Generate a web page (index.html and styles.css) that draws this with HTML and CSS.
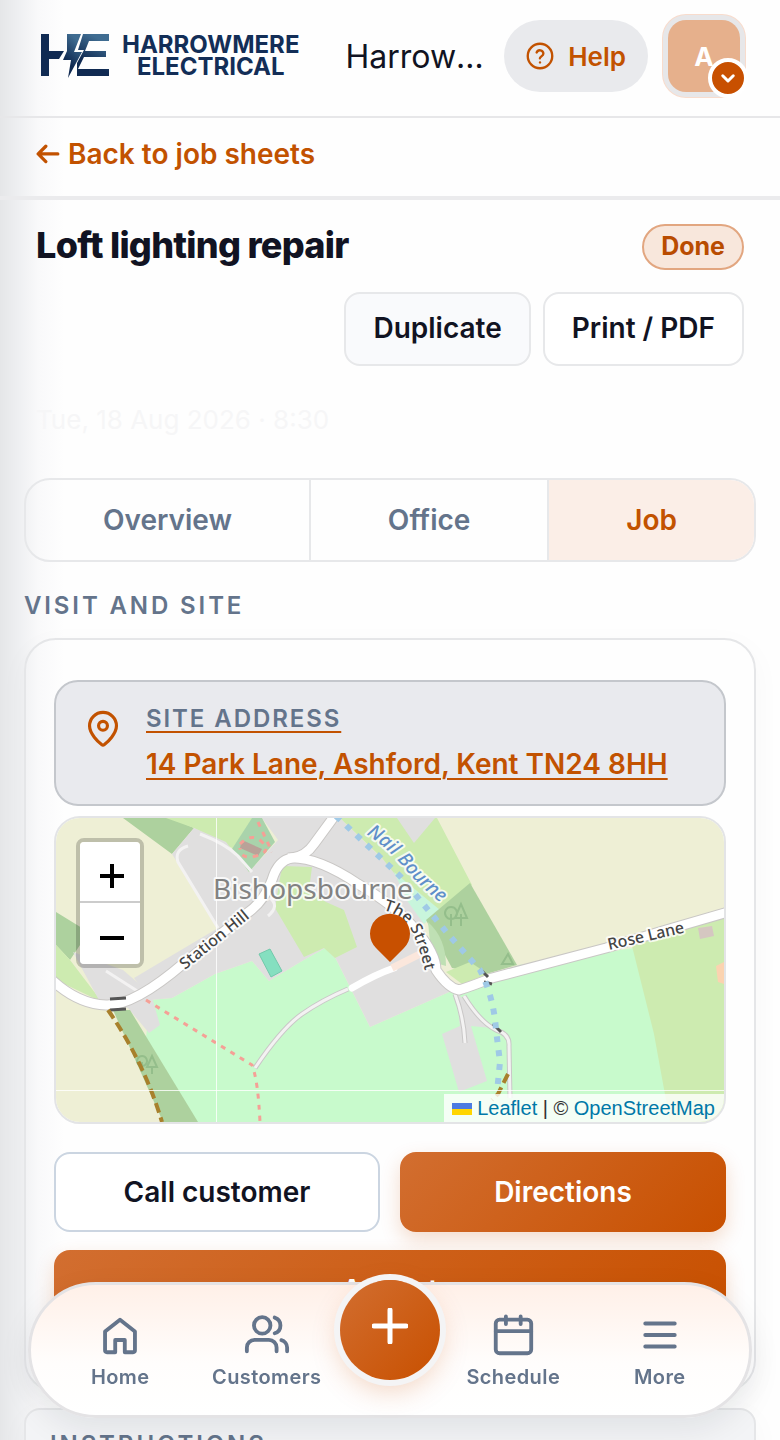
FILE: index.html
```html
<!DOCTYPE html>
<html lang="en">
<head>
<meta charset="UTF-8">
<meta name="viewport" content="width=device-width, initial-scale=1.0">
<title>Loft lighting repair - Harrowmere Electrical</title>
<link rel="stylesheet" href="styles.css">
</head>
<body>
    <div class="app">
        <header class="topbar">
            <a class="brand" href="#" aria-label="Harrowmere Electrical">
                <svg class="brand-mark" viewBox="0 0 68 44" aria-hidden="true">
                    <defs>
                        <linearGradient id="markFill" x1="0" y1="1" x2="0.4" y2="0">
                            <stop offset="0.4" stop-color="#102a52"/>
                            <stop offset="1" stop-color="#3f6c91"/>
                        </linearGradient>
                    </defs>
                    <path fill="#102a52" d="M0 0h8v17h15l-5 8H8v17H0z"/>
                    <path fill="url(#markFill)" d="M26 0h14l-7 18h8L27 44l3-18h-8l4-9z"/>
                    <path fill="url(#markFill)" d="M42 0h26v7H48l-4 10h21v6H43l-6 12h31v7H36V29l7-13h-6z"/>
                </svg>
                <span class="brand-name">HARROWMERE<br>ELECTRICAL</span>
            </a>
            <span class="company">Harrowmere Electrical</span>
            <button type="button" class="help">
                <svg viewBox="0 0 24 24" class="icon-help" aria-hidden="true">
                    <circle cx="12" cy="12" r="10.500"/>
                    <path d="M9.100 9a3 3 0 0 1 5.800 1c0 2-3 2.600-3 4"/>
                    <path d="M12 17.500h.01"/>
                </svg>
                Help
            </button>
            <button type="button" class="avatar" aria-label="Account menu">
                A
                <span class="avatar-badge">
                    <svg viewBox="0 0 24 24" aria-hidden="true"><path d="m5 9 7 7 7-7"/></svg>
                </span>
            </button>
        </header>

        <nav class="back-row">
            <a href="#" class="back-link">
                <svg viewBox="0 0 22 20" aria-hidden="true"><path d="M20 10H2M9 3l-7 7 7 7"/></svg>
                Back to job sheets
            </a>
        </nav>

        <section class="job-head">
            <div class="title-row">
                <h1>Loft lighting repair</h1>
                <span class="status">Done</span>
            </div>
            <div class="head-actions">
                <button type="button" class="btn-small tinted">Duplicate</button>
                <button type="button" class="btn-small">Print / PDF</button>
            </div>
            <p class="job-date">Tue, 18 Aug 2026 · 8:30</p>
        </section>

        <main>
            <div class="tabs" role="tablist">
                <button type="button" role="tab" aria-selected="false">Overview</button>
                <button type="button" role="tab" aria-selected="false">Office</button>
                <button type="button" role="tab" aria-selected="true" class="active">Job</button>
            </div>

            <h2 class="section-label">Visit and site</h2>

            <div class="card">
                <a href="#" class="address">
                    <svg viewBox="0 0 24 24" aria-hidden="true">
                        <path d="M20.500 10c0 5-5.500 10.200-7.600 11.800a1.500 1.500 0 0 1-1.800 0C9 20.200 3.500 15 3.500 10a8.500 8.500 0 0 1 17 0"/>
                        <circle cx="12" cy="10" r="2.800"/>
                    </svg>
                    <span class="address-text">
                        <span class="address-label">Site address</span>
                        <span class="address-value">14 Park Lane, Ashford, Kent TN24 8HH</span>
                    </span>
                </a>

                <div class="map">
                    <svg class="map-tiles" viewBox="0 0 668 304" preserveAspectRatio="xMidYMid slice" role="img" aria-label="Map of Bishopsbourne">
                        <rect width="668" height="304" fill="#eeefd5"/>
                        <!-- fields and woods -->
                        <path fill="#c8facc" d="M94 182 116 180 159 156 196 143 213 163 246 143 269 130 280 141 314 209 400 171 463 147 578 130 630 304H140L90 220z"/>
                        <path fill="#cdebb0" d="M576 128 668 94V304H614L598 216z"/>
                        <path fill="#add19e" d="M67 0h48l23 10-22 26zM0 94 26 110V124L14 142 0 127z"/>
                        <path fill="#cdebb0" d="M110 0h90l-20 32-42-22zM0 127 14 142 46 184 0 162z"/>
                        <path fill="#e0dfdf" d="M138 10 170 24 193 54 222 22 206 0H284L344 58 366 100 378 148 400 171 314 209 280 141 269 130 246 143 213 163 196 143 159 156 116 180 94 182 78 160 162 110 116 36z"/>
                        <path fill="#e0dfdf" d="M17 134 67 152 95 176 104 207 93 215 72 190 44 184z"/>
                        <path fill="#a9d3ab" d="M196 0 206 0 219 24 193 54 176 31z"/>
                        <path fill="#cdebb0" d="M226 48 256 49 253 72 270 84 288 92 301 129 279 140 268 130 248 139 219 90z"/>
                        <path fill="#cdebb0" d="M284 0H381L416 67 374 100 326 40z"/>
                        <path fill="#e0dfdf" d="M341 0h38L358 25z"/>
                        <path fill="#c8f5dc" d="M338 54 384 92 368 106 352 84z"/>
                        <path fill="#add19e" d="M414 65 461 147 430 156 396 150 370 102z"/>
                        <path fill="#bfe0b4" d="M372 104q18 16 18 44l-14-4z"/>
                        <path fill="#cdebb0" d="M390 154 414 144 432 156 406 166z"/>
                        <path fill="#add19e" d="M57 192H74L142 304H107z"/>
                        <path fill="#e0dfdf" d="M400 174 436 210 415 208 431 263 403 274 386 216 404 208z"/>
                        <path fill="#85dfc0" stroke="#72c9ab" d="M203 136 214 131 226 153 215 159z"/>
                        <path fill="#b9a298" d="M186 22 206 31 202 38 184 30z"/>
                        <path fill="#d5c7c1" d="M642 110l14-2 2 10-14 3z"/>
                        <path fill="#fbd3b0" d="M660 148l8-4v22l-6-2z"/>
                        <g fill="none" stroke="#94be8b" stroke-width="2">
                            <path d="M395 101a6 6 0 1 1 .1 0zm0-5v12M405 86l-6 14h12zm0 10v12"/>
                            <path d="M86 248a5 5 0 1 1 .1 0zm0-4v10M96 238l-5 11h10zm0 10v8"/>
                            <path d="M452 136l-6 10h11z"/>
                        </g>
                        <!-- minor tracks -->
                        <g fill="none" stroke="#c9c7c7" stroke-width="5">
                            <path d="M292 171Q266 182 246 196T199 250"/>
                            <path d="M399 176Q408 200 409 225M408 178Q424 204 440 212Q454 216 453 228L454 280"/>
                        </g>
                        <g fill="none" stroke="#f3f2f2" stroke-width="3">
                            <path d="M292 171Q266 182 246 196T199 250"/>
                            <path d="M399 176Q408 200 409 225M408 178Q424 204 440 212Q454 216 453 228L454 280"/>
                            <path d="M144 16Q170 26 182 38L196 54M132 28Q118 32 122 44L162 110M50 153 86 176M212 98Q224 88 214 80"/>
                        </g>
                        <!-- roads, casing first -->
                        <g fill="none" stroke="#c9c7c5" stroke-width="11" stroke-linejoin="round">
                            <path d="M-4 162Q22 186 50 187T128 145L190 96Q208 84 216 62Q222 42 236 40Q250 38 258 26L280-4"/>
                            <path d="M232 40Q260 38 302 66Q340 88 360 112T380 152Q392 170 403 172Q416 168 436 160L550 130 610 112 672 94"/>
                        </g>
                        <g fill="none" stroke="#fff" stroke-width="9" stroke-linejoin="round">
                            <path d="M-4 162Q22 186 50 187T128 145L190 96Q208 84 216 62Q222 42 236 40Q250 38 258 26L280-4"/>
                            <path d="M232 40Q260 38 302 66Q340 88 360 112T380 152Q392 170 403 172Q416 168 436 160L550 130 610 112 672 94"/>
                        </g>
                        <path fill="none" stroke="#fff" stroke-width="7" stroke-linecap="round" d="M296 170Q320 156 338 150"/>
                        <path fill="none" stroke="#fbe7dc" stroke-width="7" d="M336 150 364 136"/>
                        <path stroke="#555" stroke-width="3" d="M54 181l16-1M54 192l16-1M424 151l8 8M428 164l8 2M437 206l8 8"/>
                        <!-- stream and footpaths -->
                        <path fill="none" stroke="#9fc9e6" stroke-width="6" stroke-dasharray="6 8" d="M280-2 344 58 392 116 424 152Q438 180 440 212L444 244 441 274"/>
                        <g fill="none" stroke="#f5a096" stroke-width="3" stroke-dasharray="5 6">
                            <path d="M90 182 196 247Q202 262 204 304M202 4 216 34M184 26Q196 14 206 24T200 38 184 30"/>
                        </g>
                        <path fill="none" stroke="#a8802c" stroke-width="4" stroke-dasharray="10 5" d="M52 192Q88 244 106 304M452 256 442 276 436 282"/>
                        <!-- tile seams -->
                        <path stroke="#fff" stroke-opacity="0.8" d="M160.500 0V304M0 272.500H668"/>
                        <path id="station" fill="none" d="M129 152 196 98"/>
                        <path id="street" fill="none" d="M327 92Q350 98 358 118T370 158"/>
                        <path id="stream" fill="none" d="M310 16Q334 32 350 52T402 98"/>
                        <g class="map-text">
                            <text class="place" x="157" y="81">Bishopsbourne</text>
                            <text class="road"><textPath href="#station">Station Hill</textPath></text>
                            <text class="road"><textPath href="#street">The Street</textPath></text>
                            <text class="water"><textPath href="#stream">Nail Bourne</textPath></text>
                            <text class="road" transform="translate(553 132) rotate(-13)">Rose Lane</text>
                        </g>
                        <path fill="#c85000" d="M334 144 320 130A20 20 0 1 1 348 130z"/>
                    </svg>
                    <div class="map-zoom">
                        <button type="button" aria-label="Zoom in"><svg viewBox="0 0 26 26" aria-hidden="true"><path d="M1 13h24M13 1v24"/></svg></button>
                        <button type="button" aria-label="Zoom out"><svg viewBox="0 0 26 26" aria-hidden="true"><path d="M1 13h24"/></svg></button>
                    </div>
                    <div class="map-credit">
                        <a href="#"><svg viewBox="0 0 20 12" aria-hidden="true"><path fill="#4c7be1" d="M0 0h20v6H0z"/><path fill="#ffd500" d="M0 6h20v6H0z"/></svg> Leaflet</a> | © <a href="#">OpenStreetMap</a>
                    </div>
                </div>

                <div class="actions">
                    <button type="button" class="btn">Call customer</button>
                    <button type="button" class="btn primary">Directions</button>
                    <button type="button" class="btn primary wide">Accept</button>
                </div>
            </div>

            <div class="card instructions">
                <h2 class="section-label">Instructions</h2>
            </div>
        </main>
    </div>

    <nav class="dock">
        <a href="#">
            <svg viewBox="0 0 24 24" aria-hidden="true"><path d="M4.200 10.200 12 4l7.800 6.200V20a1 1 0 0 1-1 1h-4.300v-6.400h-5V21H5.200a1 1 0 0 1-1-1z"/></svg>
            Home
        </a>
        <a href="#">
            <svg viewBox="0 0 24 24" aria-hidden="true"><circle cx="9.500" cy="7" r="4.300"/><path d="M1.500 20.500v-2a4 4 0 0 1 4-4h7.500a4 4 0 0 1 4 4v2M16 2.900a4.300 4.300 0 0 1 0 8.200M19.500 14.700a4 4 0 0 1 3 3.800v2"/></svg>
            Customers
        </a>
        <button type="button" class="fab" aria-label="Add">
            <svg viewBox="0 0 36 36" aria-hidden="true"><path d="M2 18h32M18 2v32"/></svg>
        </button>
        <a href="#">
            <svg viewBox="0 0 24 24" aria-hidden="true"><rect x="3" y="4" width="18.500" height="17.500" rx="2"/><path d="M8.300 2.300v4M16 2.300v4M3 10h18.500"/></svg>
            Schedule
        </a>
        <a href="#">
            <svg viewBox="0 0 24 24" aria-hidden="true"><path d="M4.300 6h15.400M4.300 12h15.400M4.300 18h15.400"/></svg>
            More
        </a>
    </nav>
</body>
</html>
```
FILE: styles.css
```css
* {
    box-sizing: border-box;
}

body {
    margin: 0;
    font-family: Inter, "Liberation Sans", sans-serif;
    font-size: 28px;
    font-weight: 600;
    color: #111322;
    background: #fefefe;
}

button {
    font: inherit;
    color: inherit;
    cursor: pointer;
}

a {
    color: #c25200;
}

svg {
    display: block;
    flex-shrink: 0;
}

.app {
    height: 100vh;
    overflow-y: auto;
    scrollbar-width: none;
    background: linear-gradient(90deg, #e5e6e8 0, #eff0f2 20px, #f9f9fa 38px, #fefefe 64px);
}

/* top bar */
.topbar {
    display: flex;
    align-items: center;
    height: 118px;
    padding: 0 40px 4px;
    border-bottom: 2px solid #e7e7e9;
}

.brand {
    display: flex;
    align-items: center;
    gap: 12px;
    text-decoration: none;
}

.brand-mark {
    width: 70px;
    height: 44px;
}

.brand-name {
    font-size: 24px;
    font-weight: 700;
    line-height: 22px;
    text-align: center;
    color: #132e57;
}

.company {
    flex: 1;
    min-width: 0;
    margin: 0 20px 0 46px;
    font-size: 32px;
    font-weight: 400;
    white-space: nowrap;
    overflow: hidden;
    text-overflow: ellipsis;
}

.help {
    display: flex;
    align-items: center;
    gap: 14px;
    height: 72px;
    padding: 0 22px;
    border: none;
    border-radius: 36px;
    background: #e9eaed;
    color: #c25200;
    font-size: 26px;
}

.icon-help {
    width: 28px;
    height: 28px;
    fill: none;
    stroke: #c25200;
    stroke-width: 2;
    stroke-linecap: round;
}

.avatar {
    position: relative;
    width: 72px;
    height: 72px;
    margin-left: 20px;
    padding: 0;
    border: none;
    border-radius: 18px;
    background: #e6b08c;
    box-shadow: 0 0 0 5px #e7e7e9, 0 0 0 6px #f8dccd;
    color: #fff;
    font-size: 26px;
    font-weight: 700;
}

.avatar-badge {
    position: absolute;
    right: -8px;
    bottom: -6px;
    display: grid;
    place-items: center;
    width: 40px;
    height: 40px;
    border: 4px solid #fff;
    border-radius: 50%;
    background: #c85000;
}

.avatar-badge svg {
    width: 18px;
    fill: none;
    stroke: #fff;
    stroke-width: 4;
    stroke-linecap: round;
    stroke-linejoin: round;
}

/* back link */
.back-row {
    padding: 18px 36px 24px;
    border-bottom: 4px solid #ebebed;
}

.back-link {
    display: inline-flex;
    align-items: center;
    gap: 8px;
    line-height: 36px;
    text-decoration: none;
}

.back-link svg {
    width: 24px;
    fill: none;
    stroke: #c25200;
    stroke-width: 3;
    stroke-linecap: round;
    stroke-linejoin: round;
}

/* job heading */
.job-head {
    padding: 24px 36px 0;
}

.title-row {
    display: flex;
    justify-content: space-between;
}

h1 {
    margin: 0;
    font-size: 36px;
    font-weight: 800;
    line-height: 42px;
    letter-spacing: -0.02em;
}

.status {
    height: 46px;
    padding: 0 17px;
    border: 2px solid #e2a680;
    border-radius: 23px;
    background: #f8e7dc;
    color: #b94c00;
    font-size: 25px;
    font-weight: 700;
    line-height: 40px;
}

.head-actions {
    display: flex;
    justify-content: flex-end;
    gap: 12px;
    margin-top: 22px;
}

.btn-small {
    height: 74px;
    padding: 0 27px 2px;
    border: 2px solid #e7e8ea;
    border-radius: 16px;
    background: #fff;
}

.btn-small.tinted {
    background: #f9fafc;
}

.job-date {
    margin: 36px 0 0;
    font-size: 26px;
    font-weight: 400;
    line-height: 36px;
    color: #f6f6f7;
}

main {
    padding: 40px 24px 0;
}

/* tabs */
.tabs {
    display: flex;
    height: 84px;
    border: 2px solid #e7e8ea;
    border-radius: 26px;
    overflow: hidden;
}

.tabs button {
    flex: 1 1 auto;
    border: none;
    background: none;
    color: #64748b;
}

.tabs button + button {
    border-left: 2px solid #e7e8ea;
}

.tabs .active {
    background: #fbeee7;
    color: #c25200;
}

.section-label {
    margin: 29px 0 17px;
    font-size: 24px;
    font-weight: 600;
    line-height: 30px;
    letter-spacing: 0.12em;
    text-transform: uppercase;
    color: #64748b;
}

/* visit card */
.card {
    padding: 40px 28px 60px;
    border: 2px solid #e5e6e8;
    border-radius: 32px;
    box-shadow: 0 8px 30px rgba(15, 23, 42, 0.03);
}

.address {
    display: flex;
    gap: 24px;
    padding: 20px 28px;
    border: 2px solid #c4c7cc;
    border-radius: 24px;
    background: #e9eaee;
    text-decoration: none;
}

.address > svg {
    width: 38px;
    height: 40px;
    margin-top: 7px;
    fill: none;
    stroke: #c25200;
    stroke-width: 2;
}

.address-text {
    display: flex;
    flex-direction: column;
    gap: 8px;
    align-items: flex-start;
}

.address-label,
.address-value {
    text-decoration: underline;
    text-decoration-color: #c25200;
    text-decoration-thickness: 2px;
    text-underline-offset: 4px;
}

.address-label {
    font-size: 24px;
    line-height: 34px;
    letter-spacing: 0.08em;
    text-transform: uppercase;
    color: #64748b;
}

.address-value {
    line-height: 40px;
}

/* map */
.map {
    position: relative;
    height: 308px;
    margin-top: 10px;
    border: 2px solid #e3e4e6;
    border-radius: 26px;
    overflow: hidden;
}

.map-tiles {
    width: 100%;
    height: 100%;
}

.map-text {
    font-family: "Noto Sans", sans-serif;
    font-weight: 500;
    paint-order: stroke;
    stroke: rgba(255, 255, 255, 0.8);
    stroke-width: 4px;
    stroke-linejoin: round;
}

.place {
    font-size: 28px;
    font-weight: 400;
    fill: #828282;
}

.road {
    font-size: 16px;
    fill: #444;
}

.water {
    font-size: 19px;
    font-style: italic;
    fill: #5f8fca;
}

.map-zoom {
    position: absolute;
    top: 20px;
    left: 20px;
    width: 68px;
    border: 4px solid rgba(0, 0, 0, 0.2);
    border-radius: 8px;
    background-clip: padding-box;
}

.map-zoom button {
    display: grid;
    place-items: center;
    width: 100%;
    height: 61px;
    padding: 8px 0 0 4px;
    border: none;
    border-radius: 0 0 4px 4px;
    background: #fff;
}

.map-zoom button:first-child {
    border-bottom: 2px solid #ccc;
    border-radius: 4px 4px 0 0;
}

.map-zoom svg {
    width: 26px;
    stroke: #000;
    stroke-width: 4;
}

.map-credit {
    position: absolute;
    right: 0;
    bottom: 0;
    padding: 0 9px 0 8px;
    background: rgba(255, 255, 255, 0.8);
    font: 20px/28px "Liberation Sans", sans-serif;
    color: #333;
}

.map-credit a {
    color: #0078a8;
    text-decoration: none;
}

.map-credit svg {
    display: inline;
    width: 20px;
    height: 12px;
}

/* card buttons */
.actions {
    display: grid;
    grid-template-columns: 1fr 1fr;
    gap: 18px 20px;
    margin-top: 28px;
}

.btn {
    height: 80px;
    border: 2px solid #cbd5e1;
    border-radius: 16px;
    background: #fff;
}

.btn.primary {
    border: none;
    background: linear-gradient(135deg, #d26e30, #c85000);
    box-shadow: 0 8px 20px rgba(200, 80, 0, 0.2);
    color: #fff;
}

.btn.wide {
    grid-column: 1 / -1;
}

.instructions {
    margin-top: 16px;
    padding: 20px 24px 40px;
    border-radius: 16px;
    background: #f3f4f6;
}

.instructions .section-label {
    margin: 0;
}

/* bottom navigation */
.dock {
    position: fixed;
    right: 28px;
    bottom: 22px;
    left: 28px;
    display: grid;
    grid-template-columns: 1fr 1fr 100px 1fr 1fr;
    height: 136px;
    padding: 0 16px;
    border: 3px solid #e4e3e5;
    border-radius: 68px;
    background: linear-gradient(#fff0e8, #fffdfc 60%, #fff);
    box-shadow: 0 12px 32px rgba(15, 23, 42, 0.08);
}

.dock a {
    display: flex;
    flex-direction: column;
    align-items: center;
    gap: 7px;
    padding-top: 27px;
    font-size: 20px;
    line-height: 24px;
    letter-spacing: 0.02em;
    color: #64748b;
    text-decoration: none;
}

.dock a svg {
    width: 46px;
    height: 46px;
    fill: none;
    stroke: #64748b;
    stroke-width: 2;
    stroke-linecap: round;
    stroke-linejoin: round;
}

.fab {
    display: grid;
    place-items: center;
    width: 100px;
    height: 100px;
    margin-top: -5px;
    padding: 0 0 8px;
    border: none;
    border-radius: 50%;
    background: linear-gradient(135deg, #d26e30, #c85000);
    box-shadow: 0 0 0 6px #f4f4f5, 0 10px 28px rgba(200, 80, 0, 0.25);
}

.fab svg {
    width: 36px;
    fill: none;
    stroke: #fff;
    stroke-width: 5;
    stroke-linecap: round;
}
```
